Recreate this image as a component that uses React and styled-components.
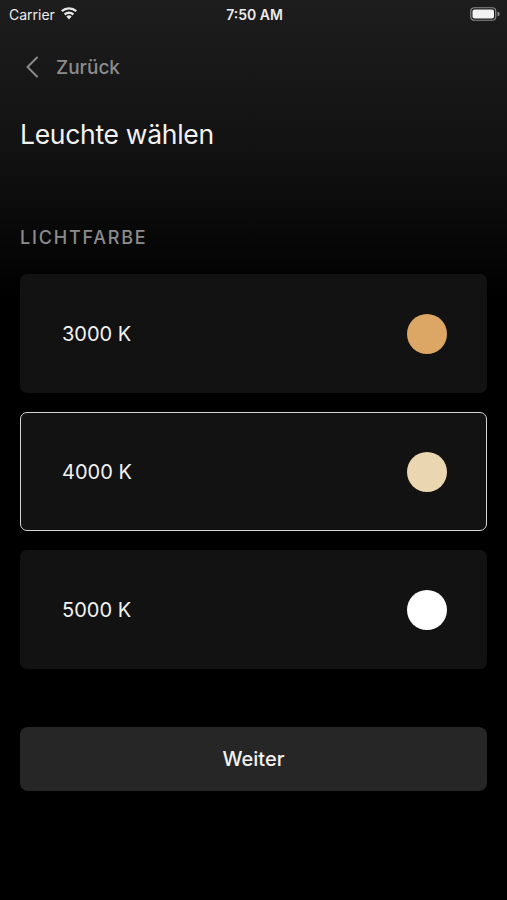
import styled, { createGlobalStyle } from "styled-components";

const options = [
  { label: "3000 K", color: "#dca664" },
  { label: "4000 K", color: "#ead6b0", selected: true },
  { label: "5000 K", color: "#ffffff" },
];

export default function App() {
  return (
    <>
      <GlobalStyle />
      <Screen>
        <StatusBar>
          <Carrier>
            Carrier
            <svg width="18" height="13" viewBox="0 0 18 13">
              <path d="M9 12.5l2.6-3.1a4 4 0 0 0-5.2 0z" fill="#e6e6e6" />
              <path d="M3.9 6.6a7.5 7.5 0 0 1 10.2 0l-1.5 1.8a5.2 5.2 0 0 0-7.2 0z" fill="#e6e6e6" />
              <path d="M1 3.3a11.8 11.8 0 0 1 16 0l-1.5 1.8a9.5 9.5 0 0 0-13 0z" fill="#e6e6e6" />
            </svg>
          </Carrier>
          <Time>7:50 AM</Time>
          <Battery>
            <svg width="30" height="14" viewBox="0 0 30 14">
              <rect x="0.75" y="0.75" width="25" height="12.5" rx="3.5" fill="none" stroke="#8a8a8a" strokeWidth="1.2" />
              <rect x="2.5" y="2.5" width="21.5" height="9" rx="2" fill="#f2f2f2" />
              <path d="M27.5 4.8v4.4a2.2 2.2 0 0 0 0-4.4z" fill="#8a8a8a" />
            </svg>
          </Battery>
        </StatusBar>

        <BackRow>
          <svg width="14" height="22" viewBox="0 0 14 22">
            <path d="M12 1.5L2.5 11l9.5 9.5" fill="none" stroke="#8a8a8a" strokeWidth="2" strokeLinecap="round" strokeLinejoin="round" />
          </svg>
          <BackLabel>Zurück</BackLabel>
        </BackRow>

        <Title>Leuchte wählen</Title>

        <SectionLabel>LICHTFARBE</SectionLabel>

        <OptionList>
          {options.map((o) => (
            <OptionCard key={o.label} $selected={o.selected}>
              <OptionLabel>{o.label}</OptionLabel>
              <Swatch $color={o.color} />
            </OptionCard>
          ))}
        </OptionList>

        <NextButton>Weiter</NextButton>
      </Screen>
    </>
  );
}

const GlobalStyle = createGlobalStyle`
  html, body {
    margin: 0;
    padding: 0;
    background: #000;
  }
  body {
    font-family: Inter, "Liberation Sans", sans-serif;
  }
`;

const Screen = styled.div`
  width: 507px;
  height: 900px;
  background: linear-gradient(to bottom, #1d1d1d 0px, #121212 150px, #000 300px, #000 100%);
  display: flex;
  flex-direction: column;
  overflow: hidden;
`;

const StatusBar = styled.div`
  height: 28px;
  display: grid;
  grid-template-columns: 1fr auto 1fr;
  align-items: center;
  padding: 0 7px 0 9px;
  color: #ececec;
  font-size: 14px;
`;

const Carrier = styled.div`
  display: flex;
  align-items: center;
  gap: 5px;
  svg {
    margin-top: -2px;
  }
`;

const Time = styled.div`
  font-weight: 600;
  font-size: 14px;
`;

const Battery = styled.div`
  display: flex;
  justify-content: flex-end;
`;

const BackRow = styled.div`
  display: flex;
  align-items: center;
  gap: 17px;
  margin: 28px 0 0 25px;
  height: 22px;
`;

const BackLabel = styled.span`
  color: #8c8c8c;
  font-size: 19px;
  font-weight: 500;
`;

const Title = styled.h1`
  margin: 40px 0 0 20px;
  color: #f2f2f2;
  font-size: 26.5px;
  font-weight: 400;
  letter-spacing: -0.3px;
  line-height: 32px;
`;

const SectionLabel = styled.div`
  margin: 77px 0 0 20px;
  color: #8c8c8c;
  font-size: 18px;
  font-weight: 500;
  letter-spacing: 1.8px;
  line-height: 22px;
`;

const OptionList = styled.div`
  display: flex;
  flex-direction: column;
  gap: 19px;
  margin: 25px 20px 0;
`;

const OptionCard = styled.div`
  box-sizing: border-box;
  height: 119px;
  border-radius: 7px;
  background: #121212;
  border: 1.5px solid ${({ $selected }) => ($selected ? "#d4d4d4" : "transparent")};
  display: flex;
  align-items: center;
  justify-content: space-between;
  padding: 0 39px 0 41px;
`;

const OptionLabel = styled.span`
  color: #f2f2f2;
  font-size: 20px;
`;

const Swatch = styled.span`
  width: 40px;
  height: 40px;
  border-radius: 50%;
  background: ${({ $color }) => $color};
`;

const NextButton = styled.button`
  margin: 58px 20px 0;
  height: 64px;
  border: none;
  border-radius: 8px;
  background: #262626;
  color: #f2f2f2;
  font-family: inherit;
  font-size: 20px;
  font-weight: 500;
  cursor: pointer;
`;
